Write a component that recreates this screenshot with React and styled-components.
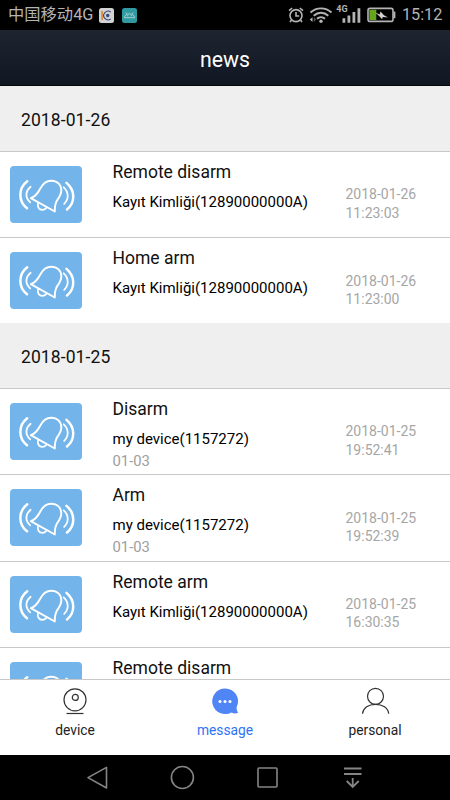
import React from 'react';
import styled, { createGlobalStyle } from 'styled-components';

const GlobalStyle = createGlobalStyle`
    * {
        box-sizing: border-box;
    }

    body {
        margin: 0;
        background: #000;
        font-family: Roboto, "Noto Sans CJK SC", sans-serif;
    }
`;

const Screen = styled.div`
    display: flex;
    flex-direction: column;
    width: 450px;
    height: 800px;
    overflow: hidden;
    background: #fff;
    color: #111;
`;

const StatusBar = styled.div`
    display: flex;
    flex: none;
    align-items: center;
    height: 30px;
    padding: 0 8px;
    background: #000;
    color: #b4b4b4;
`;

const Carrier = styled.span`
    width: 91px;
    font-size: 16.3px;
    line-height: 32px;
    white-space: nowrap;
`;

const StatusIcon = styled.svg`
    display: block;
    flex: none;
    margin-left: ${({ $gap }) => $gap || 0}px;
`;

const Spacer = styled.div`
    flex: 1;
`;

const Clock = styled.span`
    width: 40px;
    margin-left: 6px;
    font-size: 16.2px;
    line-height: 32px;
    white-space: nowrap;
`;

const Header = styled.div`
    flex: none;
    height: 56.4px;
    border-bottom: 1px solid #05070b;
    background: linear-gradient(#1e2530, #111722);
    color: #fff;
    font-size: 21.3px;
    line-height: 60px;
    text-align: center;
`;

const List = styled.div`
    flex: 1;
    min-height: 0;
    overflow: hidden;
`;

const DateTitle = styled.div`
    height: 64.6px;
    padding-left: 21px;
    background: #efefef;
    font-size: 17.5px;
    line-height: 68px;
    letter-spacing: 0.1px;
`;

const Row = styled.div`
    display: flex;
    height: 86.25px;
    padding: 14px 0 0 10px;
    border-top: 1px solid #c8c8c8;
`;

const Thumb = styled.svg`
    display: block;
    flex: none;
    width: 72px;
    height: 57px;
    border-radius: 4px;
    background: #73b5eb;
`;

const Info = styled.div`
    width: 233px;
    margin: -6px 0 0 30.5px;
    white-space: nowrap;
`;

const Title = styled.div`
    font-size: 17.5px;
    line-height: 24px;
`;

const Source = styled.div`
    margin-top: 7px;
    color: #000;
    font-size: 15px;
    line-height: 22px;
`;

const Zone = styled.div`
    color: #9e9e9e;
    font-size: 14.8px;
    line-height: 23px;
`;

const Time = styled.div`
    width: 80px;
    padding-top: 19.4px;
    color: #a6a6a6;
    font-size: 14px;
    line-height: 18.5px;
`;

const TabBar = styled.div`
    display: flex;
    flex: none;
    height: 76px;
    border-top: 1px solid #c8c8c8;
    background: #fff;
`;

const Tab = styled.div`
    display: flex;
    flex: 1;
    flex-direction: column;
    align-items: center;
    padding-top: 6px;
    color: ${({ $active }) => ($active ? '#2f73f6' : '#222')};
    font-size: 13.8px;
    line-height: 20px;

    svg {
        display: block;
        margin-bottom: 4px;
    }
`;

const NavBar = styled.div`
    display: flex;
    flex: none;
    justify-content: space-between;
    align-items: center;
    height: 45px;
    padding: 0 84px;
    background: #000;
`;

const groups = [
    {
        date: '2018-01-26',
        items: [
            { title: 'Remote disarm', source: 'Kayıt Kimliği(12890000000A)', time: '11:23:03' },
            { title: 'Home arm', source: 'Kayıt Kimliği(12890000000A)', time: '11:23:00' },
        ],
    },
    {
        date: '2018-01-25',
        items: [
            { title: 'Disarm', source: 'my device(1157272)', zone: '01-03', time: '19:52:41' },
            { title: 'Arm', source: 'my device(1157272)', zone: '01-03', time: '19:52:39' },
            { title: 'Remote arm', source: 'Kayıt Kimliği(12890000000A)', time: '16:30:35' },
            { title: 'Remote disarm' },
        ],
    },
];

const BellThumb = () => (
    <Thumb viewBox="0 0 72 57" fill="none" stroke="#fff" strokeLinecap="round" strokeLinejoin="round">
        <path strokeWidth="1.9" d="M20.8 32.2C25 30.7 27.5 28 30.3 22.5C33 17.3 36.5 14.7 41.2 14.7C47.2 14.7 51.3 18.8 51.3 24.3C51.3 28 49.8 30.6 47.5 33.6C45.2 36.8 44.7 40 44.8 45.5Z" />
        <path strokeWidth="1.8" d="M28 37.5C27.2 41 29.2 43.9 32.2 43.9C34.1 43.9 35.7 42.9 36.6 41.4" />
        <path strokeWidth="2.5" d="M17.2 15.3C8.2 22.3 8 35 17 42.3" />
        <path strokeWidth="1.8" d="M20.6 20.8C15.2 25.4 15 31.7 20.2 36.3" />
        <path strokeWidth="1.8" d="M53.7 21.3C58.9 26 59 33.3 54.2 37.8" />
        <path strokeWidth="2.5" d="M56.5 16.9C65.3 24.2 65.5 36.7 57 43.5" />
    </Thumb>
);

const StatusIcons = () => (
    <>
        <StatusIcon width="18" height="18" viewBox="0 0 18 18" fill="none" stroke="#b4b4b4" strokeWidth="1.6">
            <circle cx="9" cy="9.6" r="6" />
            <path d="M9 6v4h3.2M2 4.6L5.2 2M16 4.6L12.8 2M4.5 14L3 16M13.5 14L15 16" />
        </StatusIcon>
        <StatusIcon $gap={4} width="24" height="18" viewBox="0 0 24 18" fill="none" stroke="#b4b4b4" strokeWidth="1.9">
            <path d="M1.5 6.5C7.5 1 16.5 1 22.5 6.5M4.7 9.7C9 5.7 15 5.7 19.3 9.7M8 12.8C10.3 10.6 13.7 10.6 16 12.8" />
            <circle cx="12" cy="15.3" r="1.7" fill="#b4b4b4" stroke="none" />
            <path d="M3.5 11.2v4.8L.8 13.6z" fill="#b4b4b4" stroke="none" />
            <path d="M4.8 11.2v4.8l2.4-2.4z" fill="#555" stroke="none" />
        </StatusIcon>
        <StatusIcon $gap={3} width="26" height="22" viewBox="0 0 26 22" fill="#b4b4b4">
            <text x="0.3" y="7.5" fontSize="9" fontWeight="700">4G</text>
            <path d="M6.5 14.2h2.8v4.5H6.5zM11.5 11.4h2.8v7.3h-2.8zM16.5 8h2.8v10.7h-2.8zM21.5 4.2h2.8v14.5h-2.8z" />
        </StatusIcon>
        <StatusIcon $gap={5} width="29" height="16" viewBox="0 0 29 16">
            <rect x="1" y="1.4" width="25" height="13" rx="2" fill="none" stroke="#b4b4b4" strokeWidth="1.6" />
            <rect x="2.3" y="2.8" width="7" height="10.2" fill="#64a51c" />
            <path d="M26.5 4.6h1.9v6.6h-1.9z" fill="#b4b4b4" />
            <path d="M8 5.2L12.6 7.4 13.6 4.4 17 8.3 21 10.5 15.8 9.9 15.2 12.3 11.8 8.8z" fill="#d0d0d0" />
        </StatusIcon>
    </>
);

const DeviceIcon = () => (
    <svg width="28" height="30" viewBox="0 0 28 30" fill="none" stroke="#333" strokeWidth="1.2">
        <circle cx="14" cy="13.8" r="11" />
        <circle cx="14.3" cy="11.4" r="3" />
        <path d="M5.5 27.5h17" />
    </svg>
);

const MessageIcon = () => (
    <svg width="30" height="30" viewBox="0 0 30 30" fill="#5085f5">
        <path d="M15 2.5a12.8 12.8 0 1 0 6.4 23.9c2.3 1.3 4.6 1.2 6.7.3-1.2-1.6-1.5-3-1.5-5.5A12.8 12.8 0 0 0 15 2.5z" />
        <g fill="#fff">
            <circle cx="10" cy="15.4" r="1.5" />
            <circle cx="15" cy="15.4" r="1.5" />
            <circle cx="20" cy="15.4" r="1.5" />
        </g>
    </svg>
);

const PersonalIcon = () => (
    <svg width="30" height="30" viewBox="0 0 30 30" fill="none" stroke="#333" strokeWidth="1.2">
        <circle cx="15.5" cy="10.3" r="8" />
        <path d="M2.5 27.7C3.2 22 8.5 18.3 15.5 18.3S28 22 28.7 27.7" />
    </svg>
);

const App = () => (
    <>
        <GlobalStyle />
        <Screen>
            <StatusBar>
                <Carrier>中国移动4G</Carrier>
                <StatusIcon width="15" height="15" viewBox="0 0 15 15">
                    <rect width="15" height="15" rx="2.5" fill="#d2d2d2" />
                    <path d="M2.3 3h1.6v9H2.3z" fill="#d88a2d" />
                    <path d="M11.8 4.2A4.3 4.3 0 1 0 11.8 10.8" fill="none" stroke="#34477e" strokeWidth="1.1" />
                    <circle cx="8.7" cy="7.5" r="1.7" fill="#34477e" />
                </StatusIcon>
                <StatusIcon $gap={8} width="15" height="15" viewBox="0 0 15 15">
                    <rect width="15" height="15" rx="2.5" fill="#2f9ba1" />
                    <path d="M2.4 9.7C2.8 4.6 12.2 4.6 12.6 9.7zM4.7 6L3.8 4.5M10.3 6l.9-1.5" fill="none" stroke="#a5ced0" strokeWidth="1" />
                    <path d="M5 7.3h1.3v1H5zM8.7 7.3H10v1H8.7z" fill="#a5ced0" />
                </StatusIcon>
                <Spacer />
                <StatusIcons />
                <Clock>15:12</Clock>
            </StatusBar>
            <Header>news</Header>
            <List>
                {groups.map(({ date, items }) => (
                    <React.Fragment key={date}>
                        <DateTitle>{date}</DateTitle>
                        {items.map((item, i) => (
                            <Row key={i}>
                                <BellThumb />
                                <Info>
                                    <Title>{item.title}</Title>
                                    {item.source && <Source>{item.source}</Source>}
                                    {item.zone && <Zone>{item.zone}</Zone>}
                                </Info>
                                {item.time && <Time>{date}<br />{item.time}</Time>}
                            </Row>
                        ))}
                    </React.Fragment>
                ))}
            </List>
            <TabBar>
                <Tab>
                    <DeviceIcon />
                    device
                </Tab>
                <Tab $active>
                    <MessageIcon />
                    message
                </Tab>
                <Tab>
                    <PersonalIcon />
                    personal
                </Tab>
            </TabBar>
            <NavBar>
                <svg width="26" height="26" viewBox="0 0 26 26" fill="none" stroke="#858585" strokeWidth="1.6" strokeLinejoin="round">
                    <path d="M4 12.6L22.5 2.4v20.6z" />
                </svg>
                <svg width="26" height="26" viewBox="0 0 26 26" fill="none" stroke="#858585" strokeWidth="1.6">
                    <circle cx="13.4" cy="12.5" r="11" />
                </svg>
                <svg width="26" height="26" viewBox="0 0 26 26" fill="none" stroke="#858585" strokeWidth="1.6">
                    <rect x="3" y="3" width="19" height="19" rx="1" />
                </svg>
                <svg width="26" height="26" viewBox="0 0 26 26" fill="none" stroke="#858585" strokeWidth="1.8">
                    <path d="M4 3.5h17.5M4 9h17.5M12.7 13v9M6.7 16l6 6 6-6" />
                </svg>
            </NavBar>
        </Screen>
    </>
);

export default App;
